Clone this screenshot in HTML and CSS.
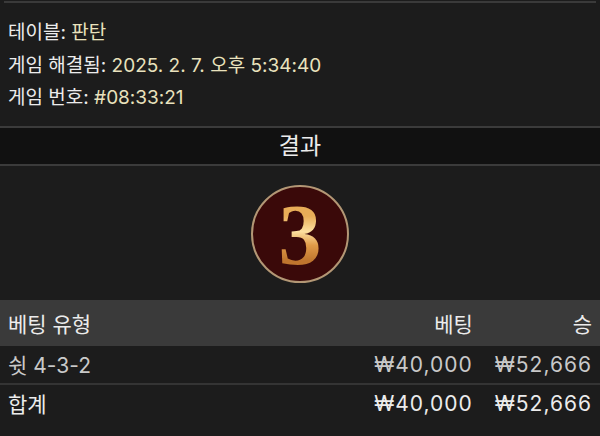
FILE: index.html
```html
<!DOCTYPE html>
<html lang="ko">
<head>
    <meta charset="UTF-8">
    <meta name="viewport" content="width=device-width, initial-scale=1.0">
    <title>게임 결과</title>
    <link rel="stylesheet" href="styles.css">
</head>
<body>
    <div class="info">
        <p>테이블: <span class="val">판탄</span></p>
        <p>게임 해결됨: <span class="val">2025. 2. 7. 오후 5:34:40</span></p>
        <p>게임 번호: <span class="val">#08:33:21</span></p>
    </div>

    <h2 class="title">결과</h2>

    <div class="result">
        <div class="ball"><span class="digit">3</span></div>
    </div>

    <table class="bets">
        <tr class="head">
            <td>베팅 유형</td>
            <td class="num">베팅</td>
            <td class="num win">승</td>
        </tr>
        <tr class="row">
            <td>쉿 4-3-2</td>
            <td class="num money">₩40,000</td>
            <td class="num win money">₩52,666</td>
        </tr>
        <tr class="total">
            <td>합계</td>
            <td class="num money">₩40,000</td>
            <td class="num win money">₩52,666</td>
        </tr>
    </table>
</body>
</html>
```

FILE: styles.css
```css
body{
    margin: 0;
    background-color: #1c1c1c;
    color: #ececec;
    font-family: Inter, "Noto Sans CJK KR", sans-serif;
    font-size: 19px;
}
.info{
    margin: 1px 4px 0 4px;
    border-top: 2px solid #3a3a3a;
    padding: 14px 4px 11px 4px;
}
.info p{
    margin: 0;
    line-height: 32.5px;
}
.val{
    color: #e9e2bd;
}
.title{
    margin: 0;
    border-top: 2px solid #3b3b3b;
    border-bottom: 2px solid #3b3b3b;
    background-color: #111;
    text-align: center;
    font-weight: normal;
    font-size: 23px;
    line-height: 36px;
}
.result{
    display: flex;
    justify-content: center;
    padding: 19px 0 17px 0;
}
.ball{
    width: 94px;
    height: 94px;
    border-radius: 50%;
    border: 2px solid #b39775;
    background-color: #3a0909;
    display: flex;
    align-items: center;
    justify-content: center;
}
.digit{
    font-family: "Liberation Serif", serif;
    font-weight: bold;
    font-size: 86px;
    line-height: 1;
    margin-top: 2px;
    color: transparent;
    background-image: linear-gradient(180deg, #e8ad58 28%, #fde0a0 46%, #e09a48 62%, #bf752e 80%);
    -webkit-background-clip: text;
    background-clip: text;
}
.bets{
    width: 100%;
    border-collapse: collapse;
    font-size: 21px;
}
.bets td{
    padding: 0 8px;
    white-space: nowrap;
}
.bets .num{
    text-align: right;
    width: 1%;
    padding: 0 0 0 22px;
}
.bets .money{
    letter-spacing: 1px;
}
.bets .win{
    padding-right: 8px;
}
.head{
    background-color: #3a3a3a;
    height: 46px;
}
.row{
    height: 38px;
    color: #c9c9c9;
    border-bottom: 2px solid #343434;
}
.total{
    height: 38px;
}
```
